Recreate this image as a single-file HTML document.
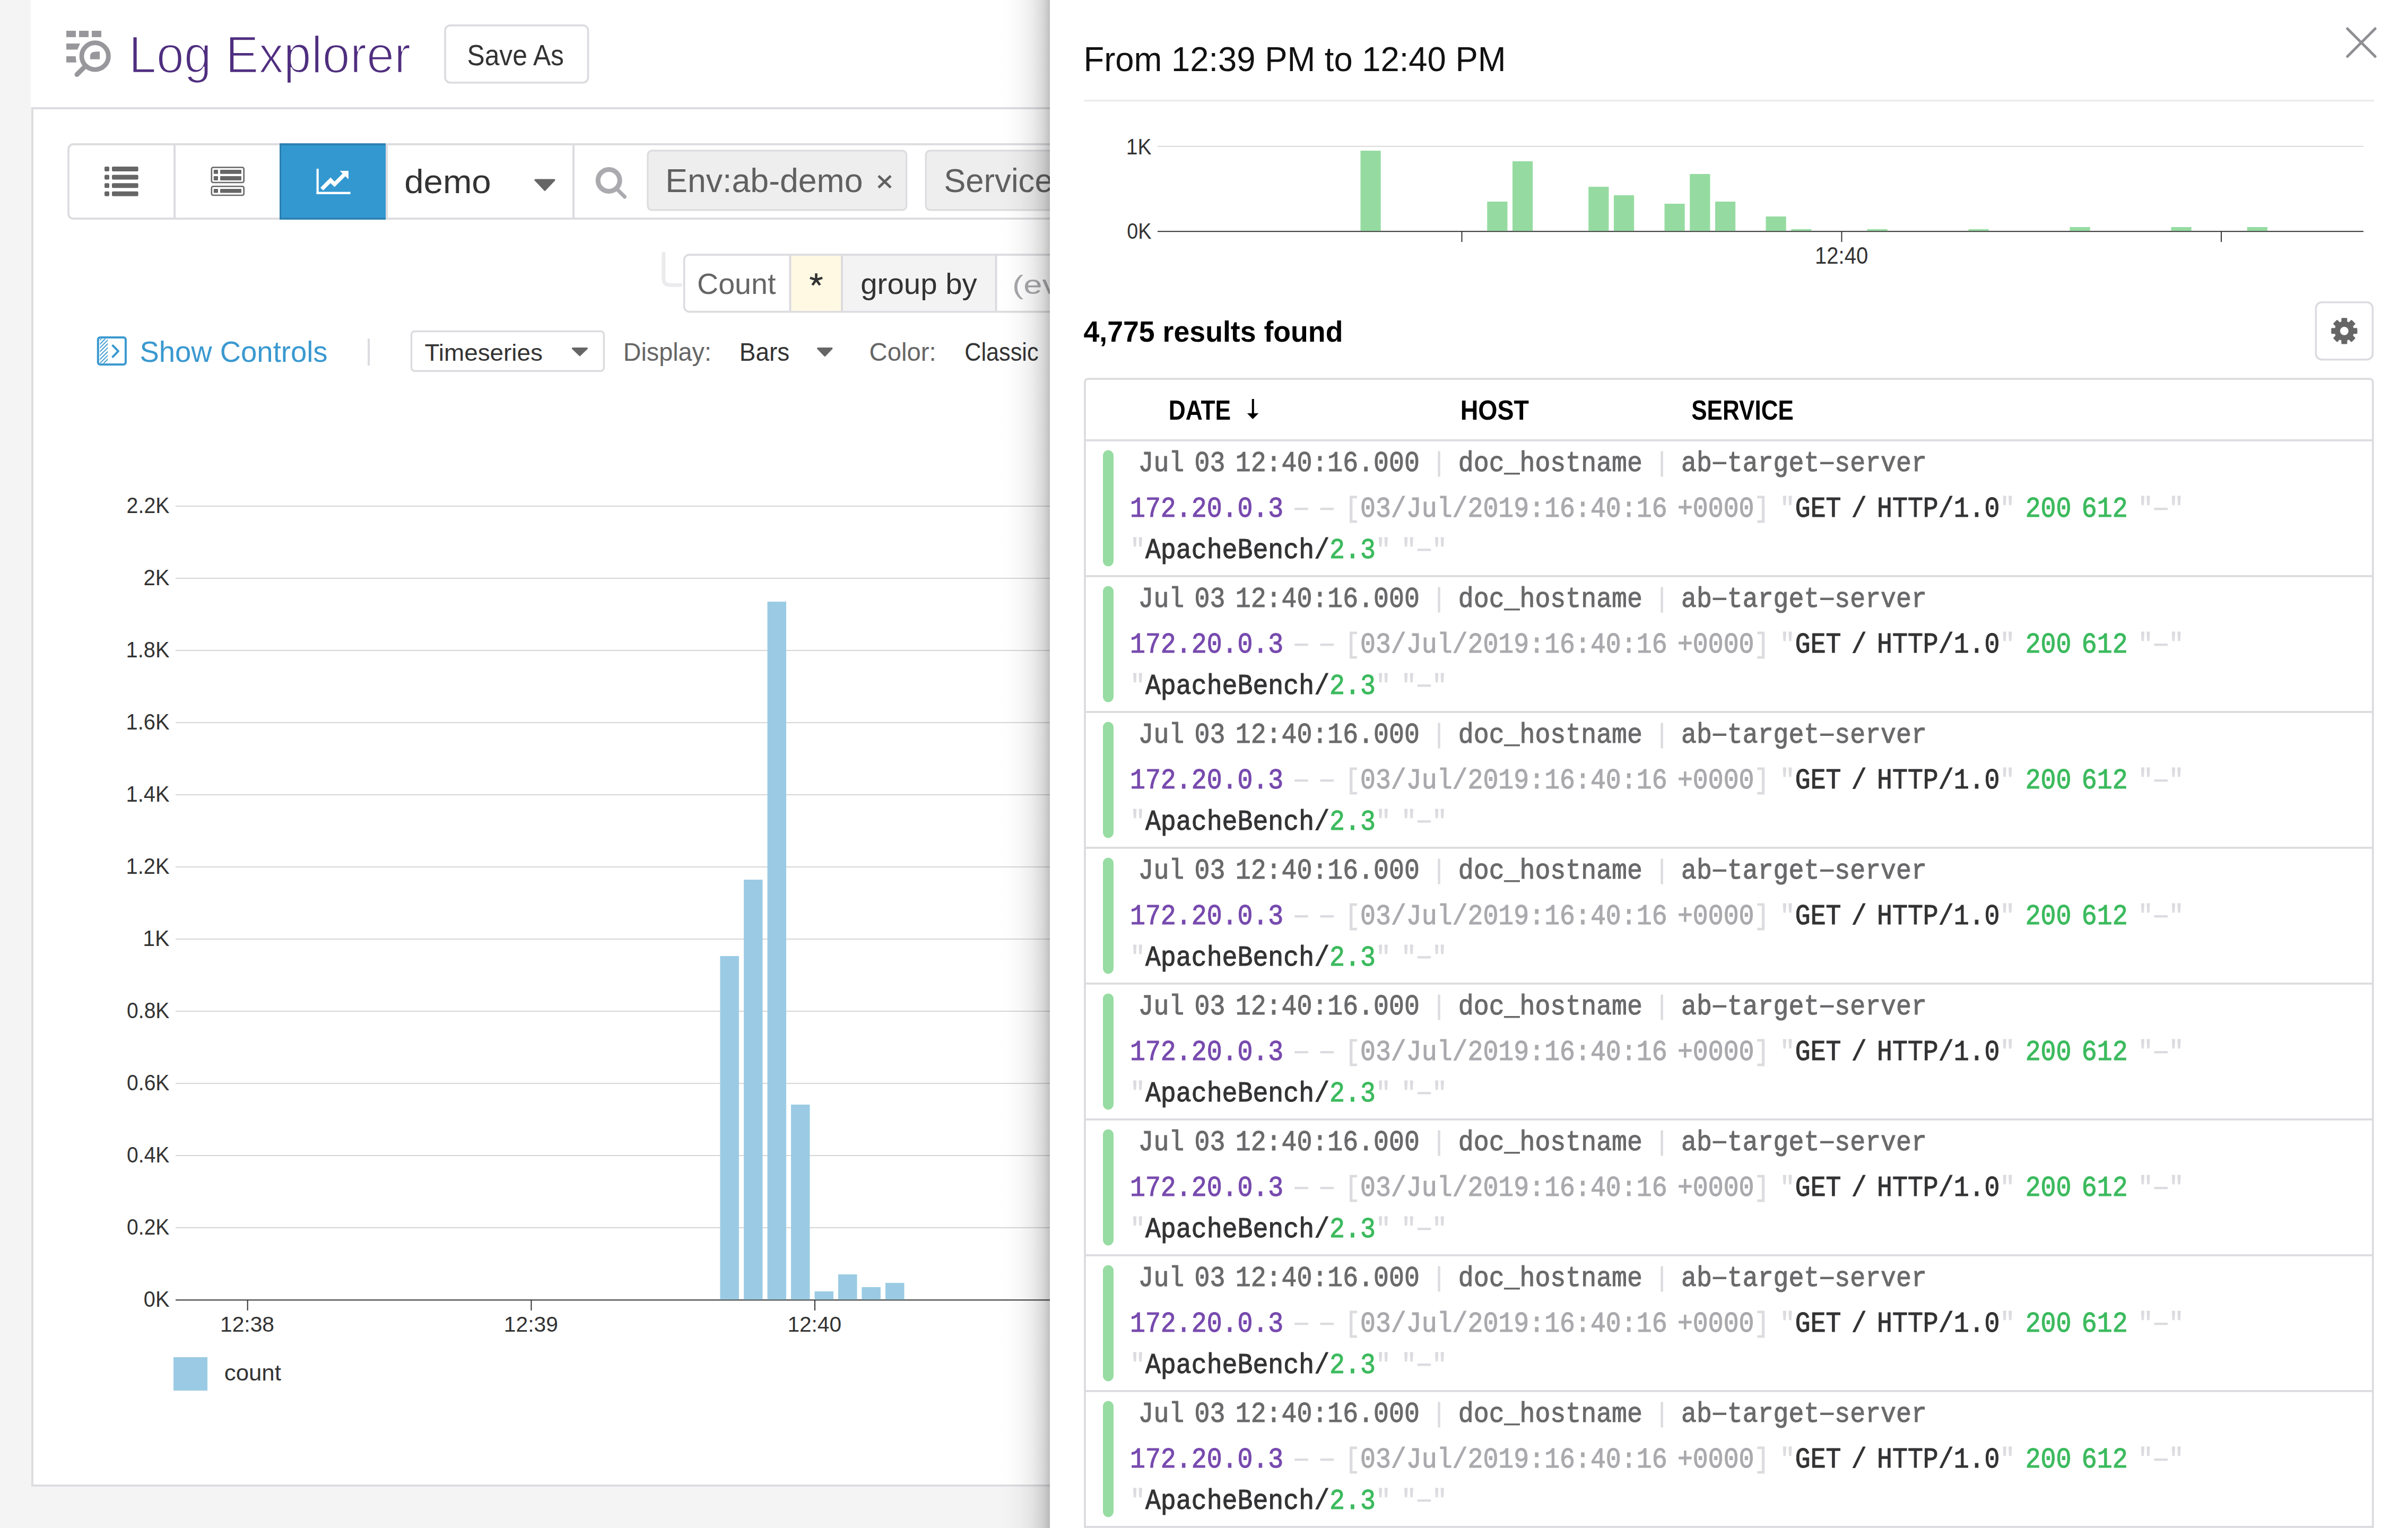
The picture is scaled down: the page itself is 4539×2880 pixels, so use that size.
<!DOCTYPE html>
<html><head><meta charset="utf-8"><title>Log Explorer</title>
<style>html,body{margin:0;padding:0;background:#f4f4f5;overflow:hidden;width:4539px;height:2880px}svg{display:block}</style>
</head><body>
<svg width="4539" height="2880" viewBox="0 0 4539 2880"><rect x="0.00" y="0.00" width="4539.00" height="2880.00" fill="#f4f4f5"/>
<rect x="58.00" y="0.00" width="4481.00" height="202.00" fill="#ffffff"/>
<rect x="59.00" y="202.00" width="4480.00" height="2600.00" fill="#dddde1"/>
<rect x="63.00" y="206.00" width="4476.00" height="2592.00" fill="#ffffff"/>
<rect x="125.00" y="58.00" width="18.00" height="12.00" fill="#98989c"/>
<rect x="149.00" y="58.00" width="18.00" height="12.00" fill="#98989c"/>
<rect x="173.00" y="58.00" width="18.00" height="12.00" fill="#98989c"/>
<path d="M125 82 H151 L146 93.6 H125 Z" fill="#98989c"/>
<path d="M125 106 H142.5 L144 117.7 H125 Z" fill="#98989c"/>
<circle cx="179.2" cy="105.9" r="25.2" fill="none" stroke="#98989c" stroke-width="8.8"/>
<line x1="145" y1="140.5" x2="158" y2="127.5" stroke="#98989c" stroke-width="9" stroke-linecap="round"/>
<path d="M170 111.7 V104 Q171 97.3 182 97.3 H188 V111.7 Z" fill="#98989c"/>
<text transform="translate(242.51 136.80) scale(0.9463 1)" font-family='"Liberation Sans", sans-serif' font-weight="400" font-size="99.13" fill="#4f2e7f" stroke="#fff" stroke-width="2.6">Log Explorer</text>
<rect x="839.05" y="47.85" width="269.50" height="107.90" fill="#fff" stroke="#dcdce0" stroke-width="3.70" rx="10.00"/>
<text transform="translate(880.44 122.60) scale(0.8871 1)" font-family='"Liberation Sans", sans-serif' font-weight="400" font-size="56.11" fill="#333">Save As</text>
<rect x="129.05" y="271.95" width="1969.10" height="140.20" fill="#fff" stroke="#dcdce0" stroke-width="3.70" rx="9.00"/>
<rect x="327.00" y="272.00" width="4.00" height="140.00" fill="#dcdce0"/>
<rect x="1079.00" y="272.00" width="4.00" height="140.00" fill="#dcdce0"/>
<rect x="527.00" y="270.10" width="200.00" height="143.90" fill="#2b7fb1"/>
<rect x="530.00" y="274.00" width="197.00" height="136.50" fill="#3398d0"/>
<rect x="727.00" y="272.00" width="4.00" height="140.00" fill="#dcdce0"/>
<rect x="197.00" y="314.00" width="9.00" height="9.00" fill="#666666" rx="2.00"/>
<rect x="211.00" y="314.00" width="49.60" height="9.00" fill="#666666" rx="2.00"/>
<rect x="197.00" y="329.60" width="9.00" height="9.00" fill="#666666" rx="2.00"/>
<rect x="211.00" y="329.60" width="49.60" height="9.00" fill="#666666" rx="2.00"/>
<rect x="197.00" y="345.20" width="9.00" height="9.00" fill="#666666" rx="2.00"/>
<rect x="211.00" y="345.20" width="49.60" height="9.00" fill="#666666" rx="2.00"/>
<rect x="197.00" y="360.80" width="9.00" height="9.00" fill="#666666" rx="2.00"/>
<rect x="211.00" y="360.80" width="49.60" height="9.00" fill="#666666" rx="2.00"/>
<rect x="398.80" y="315.50" width="60.90" height="28.50" fill="none" stroke="#666666" stroke-width="2.60" rx="3.00"/>
<rect x="398.80" y="351.20" width="60.90" height="16.80" fill="none" stroke="#666666" stroke-width="2.60" rx="3.00"/>
<rect x="402.80" y="320.00" width="8.20" height="7.70" fill="#666666" rx="1.00"/>
<rect x="415.00" y="320.00" width="40.00" height="7.70" fill="#666666" rx="1.00"/>
<rect x="402.80" y="332.00" width="8.20" height="7.90" fill="#666666" rx="1.00"/>
<rect x="415.00" y="332.00" width="40.00" height="7.90" fill="#666666" rx="1.00"/>
<rect x="402.80" y="356.00" width="8.20" height="7.60" fill="#666666" rx="1.00"/>
<rect x="415.00" y="356.00" width="40.00" height="7.60" fill="#666666" rx="1.00"/>
<rect x="596.60" y="318.00" width="4.10" height="48.00" fill="#fff"/>
<rect x="596.60" y="361.60" width="64.00" height="4.40" fill="#fff"/>
<polyline points="606.5,356.3 623.1,339.8 630.6,347.3 650.5,327.5" fill="none" stroke="#fff" stroke-width="7.4" stroke-linejoin="miter"/>
<path d="M640.6 322 L656.9 322 L656.9 338 Z" fill="#fff"/>
<text transform="translate(762.26 363.80) scale(1.0295 1)" font-family='"Liberation Sans", sans-serif' font-weight="400" font-size="63.48" fill="#333">demo</text>
<path d="M1009.2 339.2 L1044.7 339.2 L1027 358 Z" fill="#666" stroke="#666" stroke-width="3.6" stroke-linejoin="round"/>
<circle cx="1147.7" cy="340" r="20.5" fill="none" stroke="#aaaaaf" stroke-width="9"/>
<line x1="1162" y1="355.5" x2="1177.5" y2="371" stroke="#aaaaaf" stroke-width="7" stroke-linecap="round"/>
<rect x="1220.90" y="283.80" width="487.80" height="112.10" fill="#eeeeef" stroke="#dcdce0" stroke-width="3.20" rx="8.00"/>
<text transform="translate(1254.26 362.40) scale(0.9834 1)" font-family='"Liberation Sans", sans-serif' font-weight="400" font-size="63.66" fill="#606060">Env:ab-demo</text>
<path d="M1656 331.5 L1679 353.5 M1679 331.5 L1656 353.5" stroke="#606060" stroke-width="4.6"/>
<rect x="1745.20" y="283.80" width="553.20" height="112.10" fill="#eeeeef" stroke="#dcdce0" stroke-width="3.20" rx="8.00"/>
<text transform="translate(1779.20 362.40) scale(0.9682 1)" font-family='"Liberation Sans", sans-serif' font-weight="400" font-size="63.66" fill="#606060">Service</text>
<path d="M1250.8 478 V525 Q1250.8 537.3 1263 537.3 H1282.5" fill="none" stroke="#ebebed" stroke-width="6.9" stroke-linecap="round"/>
<rect x="1289.60" y="480.10" width="1008.60" height="107.50" fill="#fff" stroke="#dcdce0" stroke-width="3.60" rx="10.00"/>
<rect x="1491.40" y="481.90" width="93.60" height="104.00" fill="#fff9e3"/>
<rect x="1589.00" y="481.90" width="286.50" height="104.00" fill="#f3f3f4"/>
<rect x="1487.40" y="480.00" width="4.00" height="108.00" fill="#dcdce0"/>
<rect x="1585.00" y="480.00" width="4.00" height="108.00" fill="#dcdce0"/>
<rect x="1875.50" y="480.00" width="4.00" height="108.00" fill="#dcdce0"/>
<text transform="translate(1313.98 554.00) scale(1.0071 1)" font-family='"Liberation Sans", sans-serif' font-weight="400" font-size="55.23" fill="#666">Count</text>
<g stroke="#333" stroke-width="4.6"><line x1="1538.5" y1="527.4" x2="1538.50" y2="515.20"/><line x1="1538.5" y1="527.4" x2="1550.10" y2="523.63"/><line x1="1538.5" y1="527.4" x2="1545.67" y2="537.27"/><line x1="1538.5" y1="527.4" x2="1531.33" y2="537.27"/><line x1="1538.5" y1="527.4" x2="1526.90" y2="523.63"/></g>
<text transform="translate(1622.23 554.00) scale(1.0299 1)" font-family='"Liberation Sans", sans-serif' font-weight="400" font-size="54.79" fill="#333">group by</text>
<text transform="translate(1908.06 554.00) scale(1.2510 1)" font-family='"Liberation Sans", sans-serif' font-weight="400" font-size="50.73" fill="#a8a8ac">(ev</text>
<rect x="184.80" y="636.00" width="52.10" height="51.00" fill="none" stroke="#3a99d0" stroke-width="4.00" rx="4.00"/>
<defs><clipPath id="hc"><rect x="188.3" y="638.5" width="14.8" height="46"/></clipPath></defs>
<g clip-path="url(#hc)" stroke="#3a99d0" stroke-width="1.9"><line x1="183.0" y1="646.5" x2="210.0" y2="619.5"/><line x1="183.0" y1="653.8" x2="210.0" y2="626.8"/><line x1="183.0" y1="661.0" x2="210.0" y2="634.0"/><line x1="183.0" y1="668.2" x2="210.0" y2="641.2"/><line x1="183.0" y1="675.5" x2="210.0" y2="648.5"/><line x1="183.0" y1="682.8" x2="210.0" y2="655.8"/><line x1="183.0" y1="690.0" x2="210.0" y2="663.0"/><line x1="183.0" y1="697.2" x2="210.0" y2="670.2"/></g>
<polyline points="212.7,651.4 222.9,661.9 212.7,672.4" fill="none" stroke="#3a99d0" stroke-width="4.2" stroke-linecap="round" stroke-linejoin="round"/>
<text transform="translate(263.53 681.80) scale(0.9805 1)" font-family='"Liberation Sans", sans-serif' font-weight="400" font-size="55.52" fill="#3a99d0">Show Controls</text>
<rect x="693.00" y="638.00" width="4.00" height="51.00" fill="#dcdce0"/>
<rect x="775.50" y="624.50" width="362.80" height="74.80" fill="#fff" stroke="#dcdce0" stroke-width="3.40" rx="6.00"/>
<text transform="translate(800.57 679.70) scale(1.0138 1)" font-family='"Liberation Sans", sans-serif' font-weight="400" font-size="45.20" fill="#333">Timeseries</text>
<path d="M1079.4 656.6 L1106.4 656.6 L1092.9 669.5 Z" fill="#666" stroke="#666" stroke-width="3.2" stroke-linejoin="round"/>
<text transform="translate(1174.77 679.50) scale(0.9886 1)" font-family='"Liberation Sans", sans-serif' font-weight="400" font-size="47.24" fill="#666">Display:</text>
<text transform="translate(1393.83 679.50) scale(0.9722 1)" font-family='"Liberation Sans", sans-serif' font-weight="400" font-size="47.24" fill="#333">Bars</text>
<path d="M1541.6 656.6 L1568 656.6 L1554.8 670.4 Z" fill="#666" stroke="#666" stroke-width="3.2" stroke-linejoin="round"/>
<text transform="translate(1638.60 679.50) scale(1.0009 1)" font-family='"Liberation Sans", sans-serif' font-weight="400" font-size="47.24" fill="#666">Color:</text>
<text transform="translate(1818.20 679.50) scale(0.9153 1)" font-family='"Liberation Sans", sans-serif' font-weight="400" font-size="47.24" fill="#333">Classic</text>
<rect x="331.00" y="953.00" width="1700.00" height="2.00" fill="#d6d6d7"/>
<text transform="translate(238.62 967.00) scale(0.9320 1)" font-family='"Liberation Sans", sans-serif' font-weight="400" font-size="42.15" fill="#333">2.2K</text>
<rect x="331.00" y="1089.00" width="1700.00" height="2.00" fill="#d6d6d7"/>
<text transform="translate(270.38 1103.00) scale(0.9517 1)" font-family='"Liberation Sans", sans-serif' font-weight="400" font-size="42.15" fill="#333">2K</text>
<rect x="331.00" y="1225.00" width="1700.00" height="2.00" fill="#d6d6d7"/>
<text transform="translate(237.57 1239.00) scale(0.9443 1)" font-family='"Liberation Sans", sans-serif' font-weight="400" font-size="42.15" fill="#333">1.8K</text>
<rect x="331.00" y="1361.00" width="1700.00" height="2.00" fill="#d6d6d7"/>
<text transform="translate(237.57 1375.00) scale(0.9443 1)" font-family='"Liberation Sans", sans-serif' font-weight="400" font-size="42.15" fill="#333">1.6K</text>
<rect x="331.00" y="1497.00" width="1700.00" height="2.00" fill="#d6d6d7"/>
<text transform="translate(237.57 1511.00) scale(0.9443 1)" font-family='"Liberation Sans", sans-serif' font-weight="400" font-size="42.15" fill="#333">1.4K</text>
<rect x="331.00" y="1633.00" width="1700.00" height="2.00" fill="#d6d6d7"/>
<text transform="translate(237.57 1647.00) scale(0.9443 1)" font-family='"Liberation Sans", sans-serif' font-weight="400" font-size="42.15" fill="#333">1.2K</text>
<rect x="331.00" y="1769.00" width="1700.00" height="2.00" fill="#d6d6d7"/>
<text transform="translate(269.27 1783.00) scale(0.9734 1)" font-family='"Liberation Sans", sans-serif' font-weight="400" font-size="42.15" fill="#333">1K</text>
<rect x="331.00" y="1905.00" width="1700.00" height="2.00" fill="#d6d6d7"/>
<text transform="translate(239.07 1919.00) scale(0.9268 1)" font-family='"Liberation Sans", sans-serif' font-weight="400" font-size="42.15" fill="#333">0.8K</text>
<rect x="331.00" y="2041.00" width="1700.00" height="2.00" fill="#d6d6d7"/>
<text transform="translate(239.07 2055.00) scale(0.9268 1)" font-family='"Liberation Sans", sans-serif' font-weight="400" font-size="42.15" fill="#333">0.6K</text>
<rect x="331.00" y="2177.00" width="1700.00" height="2.00" fill="#d6d6d7"/>
<text transform="translate(239.07 2191.00) scale(0.9268 1)" font-family='"Liberation Sans", sans-serif' font-weight="400" font-size="42.15" fill="#333">0.4K</text>
<rect x="331.00" y="2313.00" width="1700.00" height="2.00" fill="#d6d6d7"/>
<text transform="translate(239.07 2327.00) scale(0.9268 1)" font-family='"Liberation Sans", sans-serif' font-weight="400" font-size="42.15" fill="#333">0.2K</text>
<text transform="translate(270.85 2463.00) scale(0.9426 1)" font-family='"Liberation Sans", sans-serif' font-weight="400" font-size="42.15" fill="#333">0K</text>
<rect x="331.00" y="2449.30" width="1700.00" height="2.00" fill="#333"/>
<rect x="465.70" y="2450.00" width="2.00" height="20.00" fill="#333"/>
<text transform="translate(415.10 2509.70) scale(0.9862 1)" font-family='"Liberation Sans", sans-serif' font-weight="400" font-size="41.28" fill="#333">12:38</text>
<rect x="1000.40" y="2450.00" width="2.00" height="20.00" fill="#333"/>
<text transform="translate(949.79 2509.70) scale(0.9878 1)" font-family='"Liberation Sans", sans-serif' font-weight="400" font-size="41.28" fill="#333">12:39</text>
<rect x="1535.00" y="2450.00" width="2.00" height="20.00" fill="#333"/>
<text transform="translate(1484.40 2509.70) scale(0.9843 1)" font-family='"Liberation Sans", sans-serif' font-weight="400" font-size="41.28" fill="#333">12:40</text>
<rect x="1357.40" y="1802.00" width="35.50" height="647.30" fill="#9bcbe4"/>
<rect x="1402.00" y="1658.00" width="35.50" height="791.30" fill="#9bcbe4"/>
<rect x="1446.50" y="1134.00" width="35.50" height="1315.30" fill="#9bcbe4"/>
<rect x="1491.00" y="2082.00" width="35.50" height="367.30" fill="#9bcbe4"/>
<rect x="1535.50" y="2434.00" width="35.50" height="15.30" fill="#9bcbe4"/>
<rect x="1580.00" y="2402.00" width="35.50" height="47.30" fill="#9bcbe4"/>
<rect x="1624.40" y="2426.00" width="35.50" height="23.30" fill="#9bcbe4"/>
<rect x="1669.00" y="2418.00" width="35.50" height="31.30" fill="#9bcbe4"/>
<rect x="327.00" y="2558.00" width="64.00" height="63.00" fill="#9bcbe4"/>
<text transform="translate(422.84 2602.10) scale(1.0178 1)" font-family='"Liberation Sans", sans-serif' font-weight="400" font-size="42.97" fill="#333">count</text>
<defs><linearGradient id="sh" x1="0" x2="1" y1="0" y2="0"><stop offset="0" stop-color="#000" stop-opacity="0"/><stop offset="0.2" stop-color="#000" stop-opacity="0.006"/><stop offset="0.45" stop-color="#000" stop-opacity="0.03"/><stop offset="0.68" stop-color="#000" stop-opacity="0.075"/><stop offset="0.87" stop-color="#000" stop-opacity="0.15"/><stop offset="1" stop-color="#000" stop-opacity="0.25"/></linearGradient></defs>
<rect x="1879.00" y="0.00" width="100.00" height="2880.00" fill="url(#sh)"/>
<rect x="1979.00" y="0.00" width="2560.00" height="2880.00" fill="#ffffff"/>
<text transform="translate(2042.50 133.90) scale(0.9691 1)" font-family='"Liberation Sans", sans-serif' font-weight="400" font-size="65.41" fill="#111">From 12:39 PM to 12:40 PM</text>
<rect x="2043.00" y="188.00" width="2432.00" height="3.40" fill="#ececee"/>
<path d="M4424.7 53.9 L4477.2 106.4 M4477.2 53.9 L4424.7 106.4" stroke="#8f8f93" stroke-width="5" stroke-linecap="round"/>
<rect x="2182.00" y="274.80" width="2273.00" height="2.00" fill="#d9d9da"/>
<rect x="2182.00" y="435.20" width="2273.00" height="2.00" fill="#333"/>
<text transform="translate(2122.73 290.50) scale(0.9190 1)" font-family='"Liberation Sans", sans-serif' font-weight="400" font-size="42.44" fill="#333">1K</text>
<text transform="translate(2124.22 449.80) scale(0.9023 1)" font-family='"Liberation Sans", sans-serif' font-weight="400" font-size="41.86" fill="#333">0K</text>
<rect x="2754.50" y="436.00" width="2.00" height="20.00" fill="#333"/>
<rect x="3470.50" y="436.00" width="2.00" height="20.00" fill="#333"/>
<rect x="4186.00" y="436.00" width="2.00" height="20.00" fill="#333"/>
<text transform="translate(3420.94 497.00) scale(0.9203 1)" font-family='"Liberation Sans", sans-serif' font-weight="400" font-size="43.61" fill="#333">12:40</text>
<rect x="2564.50" y="284.00" width="38.20" height="151.20" fill="#95dba1"/>
<rect x="2803.25" y="380.00" width="38.20" height="55.20" fill="#95dba1"/>
<rect x="2851.00" y="304.00" width="38.20" height="131.20" fill="#95dba1"/>
<rect x="2994.25" y="352.00" width="38.20" height="83.20" fill="#95dba1"/>
<rect x="3042.00" y="368.00" width="38.20" height="67.20" fill="#95dba1"/>
<rect x="3137.50" y="384.00" width="38.20" height="51.20" fill="#95dba1"/>
<rect x="3185.25" y="328.00" width="38.20" height="107.20" fill="#95dba1"/>
<rect x="3233.00" y="380.00" width="38.20" height="55.20" fill="#95dba1"/>
<rect x="3328.50" y="408.00" width="38.20" height="27.20" fill="#95dba1"/>
<rect x="3376.25" y="432.00" width="38.20" height="3.20" fill="#95dba1"/>
<rect x="3519.50" y="432.00" width="38.20" height="3.20" fill="#95dba1"/>
<rect x="3710.50" y="432.00" width="38.20" height="3.20" fill="#95dba1"/>
<rect x="3901.50" y="428.00" width="38.20" height="7.20" fill="#95dba1"/>
<rect x="4092.50" y="428.00" width="38.20" height="7.20" fill="#95dba1"/>
<rect x="4235.75" y="428.00" width="38.20" height="7.20" fill="#95dba1"/>
<rect x="4365.40" y="569.80" width="107.00" height="107.90" fill="#fff" stroke="#dcdce0" stroke-width="3.60" rx="11.00"/>
<g fill="#666"><rect x="4413.40" y="599.20" width="11" height="14" rx="1.5" transform="rotate(0.0 4418.90 623.80)"/><rect x="4413.40" y="599.20" width="11" height="14" rx="1.5" transform="rotate(45.0 4418.90 623.80)"/><rect x="4413.40" y="599.20" width="11" height="14" rx="1.5" transform="rotate(90.0 4418.90 623.80)"/><rect x="4413.40" y="599.20" width="11" height="14" rx="1.5" transform="rotate(135.0 4418.90 623.80)"/><rect x="4413.40" y="599.20" width="11" height="14" rx="1.5" transform="rotate(180.0 4418.90 623.80)"/><rect x="4413.40" y="599.20" width="11" height="14" rx="1.5" transform="rotate(225.0 4418.90 623.80)"/><rect x="4413.40" y="599.20" width="11" height="14" rx="1.5" transform="rotate(270.0 4418.90 623.80)"/><rect x="4413.40" y="599.20" width="11" height="14" rx="1.5" transform="rotate(315.0 4418.90 623.80)"/><circle cx="4418.90" cy="623.80" r="18.5"/></g>
<circle cx="4418.90" cy="623.80" r="7.9" fill="#fff"/>
<text transform="translate(2042.39 644.30) scale(0.9741 1)" font-family='"Liberation Sans", sans-serif' font-weight="700" font-size="55.09" fill="#000">4,775 results found</text>
<rect x="2045.00" y="714.10" width="2427.80" height="2284.00" fill="#fff" stroke="#dcdce0" stroke-width="3.80" rx="6.00"/>
<rect x="2046.00" y="828.00" width="2426.00" height="3.80" fill="#dcdce0"/>
<text transform="translate(2202.63 790.50) scale(0.8434 1)" font-family='"Liberation Sans", sans-serif' font-weight="700" font-size="52.62" fill="#000">DATE</text>
<rect x="2359.80" y="752.00" width="4.00" height="28.00" fill="#000"/>
<path d="M2350.8 778.9 L2372.4 778.9 L2361.4 790 Z" fill="#000"/>
<text transform="translate(2752.68 790.50) scale(0.8854 1)" font-family='"Liberation Sans", sans-serif' font-weight="700" font-size="52.62" fill="#000">HOST</text>
<text transform="translate(3188.13 790.50) scale(0.8381 1)" font-family='"Liberation Sans", sans-serif' font-weight="700" font-size="52.62" fill="#000">SERVICE</text>
<rect x="2079.00" y="848.50" width="20.00" height="219.00" fill="#97dca2" rx="10.00"/>
<g transform="translate(2145.50 888.00)" font-family='"Liberation Mono", monospace' font-size="48.33"><text transform="translate(0.00 0) scale(0.9976 1.120)" fill="#6a6a6c" stroke="#6a6a6c" stroke-width="1.0">Jul</text><text transform="translate(106.09 0) scale(0.9976 1.120)" fill="#6a6a6c" stroke="#6a6a6c" stroke-width="1.0">03</text><text transform="translate(183.25 0) scale(0.9976 1.120)" fill="#6a6a6c" stroke="#6a6a6c" stroke-width="1.0">12:40:16.000</text></g>
<rect x="2710.30" y="850.50" width="4.50" height="48.00" fill="#dcdce0"/>
<g transform="translate(2748.80 888.00)" font-family='"Liberation Mono", monospace' font-size="48.33"><text transform="translate(0.00 0) scale(0.9976 1.120)" fill="#6a6a6c" stroke="#6a6a6c" stroke-width="1.0">doc_hostname</text></g>
<rect x="3130.40" y="850.50" width="4.50" height="48.00" fill="#dcdce0"/>
<g transform="translate(3169.00 888.00)" font-family='"Liberation Mono", monospace' font-size="48.33"><text transform="translate(0.00 0) scale(0.9976 1.120)" fill="#6a6a6c" stroke="#6a6a6c" stroke-width="1.0">ab</text><text transform="translate(86.79 0) scale(0.9976 1.120)" fill="#6a6a6c" stroke="#6a6a6c" stroke-width="1.0">target</text><text transform="translate(289.30 0) scale(0.9976 1.120)" fill="#6a6a6c" stroke="#6a6a6c" stroke-width="1.0">server</text><rect x="59.58" y="-17.40" width="25.50" height="4.40" fill="#6a6a6c"/><rect x="262.08" y="-17.40" width="25.50" height="4.40" fill="#6a6a6c"/></g>
<g transform="translate(2130.00 974.40)" font-family='"Liberation Mono", monospace' font-size="48.33"><text transform="translate(0.00 0) scale(0.9976 1.120)" fill="#774aae" stroke="#774aae" stroke-width="1.0">172.20.0.3</text><text transform="translate(405.06 0) scale(0.9976 1.120)" fill="#dcdce0" stroke="#dcdce0" stroke-width="1.0">[</text><text transform="translate(433.99 0) scale(0.9976 1.120)" fill="#aaaaae" stroke="#aaaaae" stroke-width="1.0">03/Jul/2019:16:40:16</text><text transform="translate(1031.89 0) scale(0.9976 1.120)" fill="#aaaaae" stroke="#aaaaae" stroke-width="1.0">+0000</text><text transform="translate(1176.54 0) scale(0.9976 1.120)" fill="#dcdce0" stroke="#dcdce0" stroke-width="1.0">]</text><text transform="translate(1224.77 0) scale(0.9976 1.120)" fill="#dcdce0" stroke="#dcdce0" stroke-width="1.0">&quot;</text><text transform="translate(1253.70 0) scale(0.9976 1.120)" fill="#333335" stroke="#333335" stroke-width="1.0">GET</text><text transform="translate(1359.79 0) scale(0.9976 1.120)" fill="#333335" stroke="#333335" stroke-width="1.0">/</text><text transform="translate(1408.02 0) scale(0.9976 1.120)" fill="#333335" stroke="#333335" stroke-width="1.0">HTTP/1.0</text><text transform="translate(1639.46 0) scale(0.9976 1.120)" fill="#dcdce0" stroke="#dcdce0" stroke-width="1.0">&quot;</text><text transform="translate(1687.69 0) scale(0.9976 1.120)" fill="#3cba5e" stroke="#3cba5e" stroke-width="1.0">200</text><text transform="translate(1793.78 0) scale(0.9976 1.120)" fill="#3cba5e" stroke="#3cba5e" stroke-width="1.0">612</text><text transform="translate(1899.87 0) scale(0.9976 1.120)" fill="#dcdce0" stroke="#dcdce0" stroke-width="1.0">&quot;</text><text transform="translate(1957.73 0) scale(0.9976 1.120)" fill="#dcdce0" stroke="#dcdce0" stroke-width="1.0">&quot;</text><rect x="310.31" y="-17.40" width="25.50" height="4.40" fill="#dcdce0"/><rect x="358.55" y="-17.40" width="25.50" height="4.40" fill="#dcdce0"/><rect x="1930.52" y="-17.40" width="25.50" height="4.40" fill="#dcdce0"/></g>
<g transform="translate(2130.00 1051.50)" font-family='"Liberation Mono", monospace' font-size="48.33"><text transform="translate(0.00 0) scale(0.9976 1.120)" fill="#dcdce0" stroke="#dcdce0" stroke-width="1.0">&quot;</text><text transform="translate(28.93 0) scale(0.9976 1.120)" fill="#333335" stroke="#333335" stroke-width="1.0">ApacheBench/</text><text transform="translate(376.09 0) scale(0.9976 1.120)" fill="#3cba5e" stroke="#3cba5e" stroke-width="1.0">2.3</text><text transform="translate(462.88 0) scale(0.9976 1.120)" fill="#dcdce0" stroke="#dcdce0" stroke-width="1.0">&quot;</text><text transform="translate(511.11 0) scale(0.9976 1.120)" fill="#dcdce0" stroke="#dcdce0" stroke-width="1.0">&quot;</text><text transform="translate(568.97 0) scale(0.9976 1.120)" fill="#dcdce0" stroke="#dcdce0" stroke-width="1.0">&quot;</text><rect x="541.76" y="-17.40" width="25.50" height="4.40" fill="#dcdce0"/></g>
<rect x="2046.00" y="1084.00" width="2426.00" height="3.80" fill="#dcdce0"/>
<rect x="2079.00" y="1104.50" width="20.00" height="219.00" fill="#97dca2" rx="10.00"/>
<g transform="translate(2145.50 1144.00)" font-family='"Liberation Mono", monospace' font-size="48.33"><text transform="translate(0.00 0) scale(0.9976 1.120)" fill="#6a6a6c" stroke="#6a6a6c" stroke-width="1.0">Jul</text><text transform="translate(106.09 0) scale(0.9976 1.120)" fill="#6a6a6c" stroke="#6a6a6c" stroke-width="1.0">03</text><text transform="translate(183.25 0) scale(0.9976 1.120)" fill="#6a6a6c" stroke="#6a6a6c" stroke-width="1.0">12:40:16.000</text></g>
<rect x="2710.30" y="1106.50" width="4.50" height="48.00" fill="#dcdce0"/>
<g transform="translate(2748.80 1144.00)" font-family='"Liberation Mono", monospace' font-size="48.33"><text transform="translate(0.00 0) scale(0.9976 1.120)" fill="#6a6a6c" stroke="#6a6a6c" stroke-width="1.0">doc_hostname</text></g>
<rect x="3130.40" y="1106.50" width="4.50" height="48.00" fill="#dcdce0"/>
<g transform="translate(3169.00 1144.00)" font-family='"Liberation Mono", monospace' font-size="48.33"><text transform="translate(0.00 0) scale(0.9976 1.120)" fill="#6a6a6c" stroke="#6a6a6c" stroke-width="1.0">ab</text><text transform="translate(86.79 0) scale(0.9976 1.120)" fill="#6a6a6c" stroke="#6a6a6c" stroke-width="1.0">target</text><text transform="translate(289.30 0) scale(0.9976 1.120)" fill="#6a6a6c" stroke="#6a6a6c" stroke-width="1.0">server</text><rect x="59.58" y="-17.40" width="25.50" height="4.40" fill="#6a6a6c"/><rect x="262.08" y="-17.40" width="25.50" height="4.40" fill="#6a6a6c"/></g>
<g transform="translate(2130.00 1230.40)" font-family='"Liberation Mono", monospace' font-size="48.33"><text transform="translate(0.00 0) scale(0.9976 1.120)" fill="#774aae" stroke="#774aae" stroke-width="1.0">172.20.0.3</text><text transform="translate(405.06 0) scale(0.9976 1.120)" fill="#dcdce0" stroke="#dcdce0" stroke-width="1.0">[</text><text transform="translate(433.99 0) scale(0.9976 1.120)" fill="#aaaaae" stroke="#aaaaae" stroke-width="1.0">03/Jul/2019:16:40:16</text><text transform="translate(1031.89 0) scale(0.9976 1.120)" fill="#aaaaae" stroke="#aaaaae" stroke-width="1.0">+0000</text><text transform="translate(1176.54 0) scale(0.9976 1.120)" fill="#dcdce0" stroke="#dcdce0" stroke-width="1.0">]</text><text transform="translate(1224.77 0) scale(0.9976 1.120)" fill="#dcdce0" stroke="#dcdce0" stroke-width="1.0">&quot;</text><text transform="translate(1253.70 0) scale(0.9976 1.120)" fill="#333335" stroke="#333335" stroke-width="1.0">GET</text><text transform="translate(1359.79 0) scale(0.9976 1.120)" fill="#333335" stroke="#333335" stroke-width="1.0">/</text><text transform="translate(1408.02 0) scale(0.9976 1.120)" fill="#333335" stroke="#333335" stroke-width="1.0">HTTP/1.0</text><text transform="translate(1639.46 0) scale(0.9976 1.120)" fill="#dcdce0" stroke="#dcdce0" stroke-width="1.0">&quot;</text><text transform="translate(1687.69 0) scale(0.9976 1.120)" fill="#3cba5e" stroke="#3cba5e" stroke-width="1.0">200</text><text transform="translate(1793.78 0) scale(0.9976 1.120)" fill="#3cba5e" stroke="#3cba5e" stroke-width="1.0">612</text><text transform="translate(1899.87 0) scale(0.9976 1.120)" fill="#dcdce0" stroke="#dcdce0" stroke-width="1.0">&quot;</text><text transform="translate(1957.73 0) scale(0.9976 1.120)" fill="#dcdce0" stroke="#dcdce0" stroke-width="1.0">&quot;</text><rect x="310.31" y="-17.40" width="25.50" height="4.40" fill="#dcdce0"/><rect x="358.55" y="-17.40" width="25.50" height="4.40" fill="#dcdce0"/><rect x="1930.52" y="-17.40" width="25.50" height="4.40" fill="#dcdce0"/></g>
<g transform="translate(2130.00 1307.50)" font-family='"Liberation Mono", monospace' font-size="48.33"><text transform="translate(0.00 0) scale(0.9976 1.120)" fill="#dcdce0" stroke="#dcdce0" stroke-width="1.0">&quot;</text><text transform="translate(28.93 0) scale(0.9976 1.120)" fill="#333335" stroke="#333335" stroke-width="1.0">ApacheBench/</text><text transform="translate(376.09 0) scale(0.9976 1.120)" fill="#3cba5e" stroke="#3cba5e" stroke-width="1.0">2.3</text><text transform="translate(462.88 0) scale(0.9976 1.120)" fill="#dcdce0" stroke="#dcdce0" stroke-width="1.0">&quot;</text><text transform="translate(511.11 0) scale(0.9976 1.120)" fill="#dcdce0" stroke="#dcdce0" stroke-width="1.0">&quot;</text><text transform="translate(568.97 0) scale(0.9976 1.120)" fill="#dcdce0" stroke="#dcdce0" stroke-width="1.0">&quot;</text><rect x="541.76" y="-17.40" width="25.50" height="4.40" fill="#dcdce0"/></g>
<rect x="2046.00" y="1340.00" width="2426.00" height="3.80" fill="#dcdce0"/>
<rect x="2079.00" y="1360.50" width="20.00" height="219.00" fill="#97dca2" rx="10.00"/>
<g transform="translate(2145.50 1400.00)" font-family='"Liberation Mono", monospace' font-size="48.33"><text transform="translate(0.00 0) scale(0.9976 1.120)" fill="#6a6a6c" stroke="#6a6a6c" stroke-width="1.0">Jul</text><text transform="translate(106.09 0) scale(0.9976 1.120)" fill="#6a6a6c" stroke="#6a6a6c" stroke-width="1.0">03</text><text transform="translate(183.25 0) scale(0.9976 1.120)" fill="#6a6a6c" stroke="#6a6a6c" stroke-width="1.0">12:40:16.000</text></g>
<rect x="2710.30" y="1362.50" width="4.50" height="48.00" fill="#dcdce0"/>
<g transform="translate(2748.80 1400.00)" font-family='"Liberation Mono", monospace' font-size="48.33"><text transform="translate(0.00 0) scale(0.9976 1.120)" fill="#6a6a6c" stroke="#6a6a6c" stroke-width="1.0">doc_hostname</text></g>
<rect x="3130.40" y="1362.50" width="4.50" height="48.00" fill="#dcdce0"/>
<g transform="translate(3169.00 1400.00)" font-family='"Liberation Mono", monospace' font-size="48.33"><text transform="translate(0.00 0) scale(0.9976 1.120)" fill="#6a6a6c" stroke="#6a6a6c" stroke-width="1.0">ab</text><text transform="translate(86.79 0) scale(0.9976 1.120)" fill="#6a6a6c" stroke="#6a6a6c" stroke-width="1.0">target</text><text transform="translate(289.30 0) scale(0.9976 1.120)" fill="#6a6a6c" stroke="#6a6a6c" stroke-width="1.0">server</text><rect x="59.58" y="-17.40" width="25.50" height="4.40" fill="#6a6a6c"/><rect x="262.08" y="-17.40" width="25.50" height="4.40" fill="#6a6a6c"/></g>
<g transform="translate(2130.00 1486.40)" font-family='"Liberation Mono", monospace' font-size="48.33"><text transform="translate(0.00 0) scale(0.9976 1.120)" fill="#774aae" stroke="#774aae" stroke-width="1.0">172.20.0.3</text><text transform="translate(405.06 0) scale(0.9976 1.120)" fill="#dcdce0" stroke="#dcdce0" stroke-width="1.0">[</text><text transform="translate(433.99 0) scale(0.9976 1.120)" fill="#aaaaae" stroke="#aaaaae" stroke-width="1.0">03/Jul/2019:16:40:16</text><text transform="translate(1031.89 0) scale(0.9976 1.120)" fill="#aaaaae" stroke="#aaaaae" stroke-width="1.0">+0000</text><text transform="translate(1176.54 0) scale(0.9976 1.120)" fill="#dcdce0" stroke="#dcdce0" stroke-width="1.0">]</text><text transform="translate(1224.77 0) scale(0.9976 1.120)" fill="#dcdce0" stroke="#dcdce0" stroke-width="1.0">&quot;</text><text transform="translate(1253.70 0) scale(0.9976 1.120)" fill="#333335" stroke="#333335" stroke-width="1.0">GET</text><text transform="translate(1359.79 0) scale(0.9976 1.120)" fill="#333335" stroke="#333335" stroke-width="1.0">/</text><text transform="translate(1408.02 0) scale(0.9976 1.120)" fill="#333335" stroke="#333335" stroke-width="1.0">HTTP/1.0</text><text transform="translate(1639.46 0) scale(0.9976 1.120)" fill="#dcdce0" stroke="#dcdce0" stroke-width="1.0">&quot;</text><text transform="translate(1687.69 0) scale(0.9976 1.120)" fill="#3cba5e" stroke="#3cba5e" stroke-width="1.0">200</text><text transform="translate(1793.78 0) scale(0.9976 1.120)" fill="#3cba5e" stroke="#3cba5e" stroke-width="1.0">612</text><text transform="translate(1899.87 0) scale(0.9976 1.120)" fill="#dcdce0" stroke="#dcdce0" stroke-width="1.0">&quot;</text><text transform="translate(1957.73 0) scale(0.9976 1.120)" fill="#dcdce0" stroke="#dcdce0" stroke-width="1.0">&quot;</text><rect x="310.31" y="-17.40" width="25.50" height="4.40" fill="#dcdce0"/><rect x="358.55" y="-17.40" width="25.50" height="4.40" fill="#dcdce0"/><rect x="1930.52" y="-17.40" width="25.50" height="4.40" fill="#dcdce0"/></g>
<g transform="translate(2130.00 1563.50)" font-family='"Liberation Mono", monospace' font-size="48.33"><text transform="translate(0.00 0) scale(0.9976 1.120)" fill="#dcdce0" stroke="#dcdce0" stroke-width="1.0">&quot;</text><text transform="translate(28.93 0) scale(0.9976 1.120)" fill="#333335" stroke="#333335" stroke-width="1.0">ApacheBench/</text><text transform="translate(376.09 0) scale(0.9976 1.120)" fill="#3cba5e" stroke="#3cba5e" stroke-width="1.0">2.3</text><text transform="translate(462.88 0) scale(0.9976 1.120)" fill="#dcdce0" stroke="#dcdce0" stroke-width="1.0">&quot;</text><text transform="translate(511.11 0) scale(0.9976 1.120)" fill="#dcdce0" stroke="#dcdce0" stroke-width="1.0">&quot;</text><text transform="translate(568.97 0) scale(0.9976 1.120)" fill="#dcdce0" stroke="#dcdce0" stroke-width="1.0">&quot;</text><rect x="541.76" y="-17.40" width="25.50" height="4.40" fill="#dcdce0"/></g>
<rect x="2046.00" y="1596.00" width="2426.00" height="3.80" fill="#dcdce0"/>
<rect x="2079.00" y="1616.50" width="20.00" height="219.00" fill="#97dca2" rx="10.00"/>
<g transform="translate(2145.50 1656.00)" font-family='"Liberation Mono", monospace' font-size="48.33"><text transform="translate(0.00 0) scale(0.9976 1.120)" fill="#6a6a6c" stroke="#6a6a6c" stroke-width="1.0">Jul</text><text transform="translate(106.09 0) scale(0.9976 1.120)" fill="#6a6a6c" stroke="#6a6a6c" stroke-width="1.0">03</text><text transform="translate(183.25 0) scale(0.9976 1.120)" fill="#6a6a6c" stroke="#6a6a6c" stroke-width="1.0">12:40:16.000</text></g>
<rect x="2710.30" y="1618.50" width="4.50" height="48.00" fill="#dcdce0"/>
<g transform="translate(2748.80 1656.00)" font-family='"Liberation Mono", monospace' font-size="48.33"><text transform="translate(0.00 0) scale(0.9976 1.120)" fill="#6a6a6c" stroke="#6a6a6c" stroke-width="1.0">doc_hostname</text></g>
<rect x="3130.40" y="1618.50" width="4.50" height="48.00" fill="#dcdce0"/>
<g transform="translate(3169.00 1656.00)" font-family='"Liberation Mono", monospace' font-size="48.33"><text transform="translate(0.00 0) scale(0.9976 1.120)" fill="#6a6a6c" stroke="#6a6a6c" stroke-width="1.0">ab</text><text transform="translate(86.79 0) scale(0.9976 1.120)" fill="#6a6a6c" stroke="#6a6a6c" stroke-width="1.0">target</text><text transform="translate(289.30 0) scale(0.9976 1.120)" fill="#6a6a6c" stroke="#6a6a6c" stroke-width="1.0">server</text><rect x="59.58" y="-17.40" width="25.50" height="4.40" fill="#6a6a6c"/><rect x="262.08" y="-17.40" width="25.50" height="4.40" fill="#6a6a6c"/></g>
<g transform="translate(2130.00 1742.40)" font-family='"Liberation Mono", monospace' font-size="48.33"><text transform="translate(0.00 0) scale(0.9976 1.120)" fill="#774aae" stroke="#774aae" stroke-width="1.0">172.20.0.3</text><text transform="translate(405.06 0) scale(0.9976 1.120)" fill="#dcdce0" stroke="#dcdce0" stroke-width="1.0">[</text><text transform="translate(433.99 0) scale(0.9976 1.120)" fill="#aaaaae" stroke="#aaaaae" stroke-width="1.0">03/Jul/2019:16:40:16</text><text transform="translate(1031.89 0) scale(0.9976 1.120)" fill="#aaaaae" stroke="#aaaaae" stroke-width="1.0">+0000</text><text transform="translate(1176.54 0) scale(0.9976 1.120)" fill="#dcdce0" stroke="#dcdce0" stroke-width="1.0">]</text><text transform="translate(1224.77 0) scale(0.9976 1.120)" fill="#dcdce0" stroke="#dcdce0" stroke-width="1.0">&quot;</text><text transform="translate(1253.70 0) scale(0.9976 1.120)" fill="#333335" stroke="#333335" stroke-width="1.0">GET</text><text transform="translate(1359.79 0) scale(0.9976 1.120)" fill="#333335" stroke="#333335" stroke-width="1.0">/</text><text transform="translate(1408.02 0) scale(0.9976 1.120)" fill="#333335" stroke="#333335" stroke-width="1.0">HTTP/1.0</text><text transform="translate(1639.46 0) scale(0.9976 1.120)" fill="#dcdce0" stroke="#dcdce0" stroke-width="1.0">&quot;</text><text transform="translate(1687.69 0) scale(0.9976 1.120)" fill="#3cba5e" stroke="#3cba5e" stroke-width="1.0">200</text><text transform="translate(1793.78 0) scale(0.9976 1.120)" fill="#3cba5e" stroke="#3cba5e" stroke-width="1.0">612</text><text transform="translate(1899.87 0) scale(0.9976 1.120)" fill="#dcdce0" stroke="#dcdce0" stroke-width="1.0">&quot;</text><text transform="translate(1957.73 0) scale(0.9976 1.120)" fill="#dcdce0" stroke="#dcdce0" stroke-width="1.0">&quot;</text><rect x="310.31" y="-17.40" width="25.50" height="4.40" fill="#dcdce0"/><rect x="358.55" y="-17.40" width="25.50" height="4.40" fill="#dcdce0"/><rect x="1930.52" y="-17.40" width="25.50" height="4.40" fill="#dcdce0"/></g>
<g transform="translate(2130.00 1819.50)" font-family='"Liberation Mono", monospace' font-size="48.33"><text transform="translate(0.00 0) scale(0.9976 1.120)" fill="#dcdce0" stroke="#dcdce0" stroke-width="1.0">&quot;</text><text transform="translate(28.93 0) scale(0.9976 1.120)" fill="#333335" stroke="#333335" stroke-width="1.0">ApacheBench/</text><text transform="translate(376.09 0) scale(0.9976 1.120)" fill="#3cba5e" stroke="#3cba5e" stroke-width="1.0">2.3</text><text transform="translate(462.88 0) scale(0.9976 1.120)" fill="#dcdce0" stroke="#dcdce0" stroke-width="1.0">&quot;</text><text transform="translate(511.11 0) scale(0.9976 1.120)" fill="#dcdce0" stroke="#dcdce0" stroke-width="1.0">&quot;</text><text transform="translate(568.97 0) scale(0.9976 1.120)" fill="#dcdce0" stroke="#dcdce0" stroke-width="1.0">&quot;</text><rect x="541.76" y="-17.40" width="25.50" height="4.40" fill="#dcdce0"/></g>
<rect x="2046.00" y="1852.00" width="2426.00" height="3.80" fill="#dcdce0"/>
<rect x="2079.00" y="1872.50" width="20.00" height="219.00" fill="#97dca2" rx="10.00"/>
<g transform="translate(2145.50 1912.00)" font-family='"Liberation Mono", monospace' font-size="48.33"><text transform="translate(0.00 0) scale(0.9976 1.120)" fill="#6a6a6c" stroke="#6a6a6c" stroke-width="1.0">Jul</text><text transform="translate(106.09 0) scale(0.9976 1.120)" fill="#6a6a6c" stroke="#6a6a6c" stroke-width="1.0">03</text><text transform="translate(183.25 0) scale(0.9976 1.120)" fill="#6a6a6c" stroke="#6a6a6c" stroke-width="1.0">12:40:16.000</text></g>
<rect x="2710.30" y="1874.50" width="4.50" height="48.00" fill="#dcdce0"/>
<g transform="translate(2748.80 1912.00)" font-family='"Liberation Mono", monospace' font-size="48.33"><text transform="translate(0.00 0) scale(0.9976 1.120)" fill="#6a6a6c" stroke="#6a6a6c" stroke-width="1.0">doc_hostname</text></g>
<rect x="3130.40" y="1874.50" width="4.50" height="48.00" fill="#dcdce0"/>
<g transform="translate(3169.00 1912.00)" font-family='"Liberation Mono", monospace' font-size="48.33"><text transform="translate(0.00 0) scale(0.9976 1.120)" fill="#6a6a6c" stroke="#6a6a6c" stroke-width="1.0">ab</text><text transform="translate(86.79 0) scale(0.9976 1.120)" fill="#6a6a6c" stroke="#6a6a6c" stroke-width="1.0">target</text><text transform="translate(289.30 0) scale(0.9976 1.120)" fill="#6a6a6c" stroke="#6a6a6c" stroke-width="1.0">server</text><rect x="59.58" y="-17.40" width="25.50" height="4.40" fill="#6a6a6c"/><rect x="262.08" y="-17.40" width="25.50" height="4.40" fill="#6a6a6c"/></g>
<g transform="translate(2130.00 1998.40)" font-family='"Liberation Mono", monospace' font-size="48.33"><text transform="translate(0.00 0) scale(0.9976 1.120)" fill="#774aae" stroke="#774aae" stroke-width="1.0">172.20.0.3</text><text transform="translate(405.06 0) scale(0.9976 1.120)" fill="#dcdce0" stroke="#dcdce0" stroke-width="1.0">[</text><text transform="translate(433.99 0) scale(0.9976 1.120)" fill="#aaaaae" stroke="#aaaaae" stroke-width="1.0">03/Jul/2019:16:40:16</text><text transform="translate(1031.89 0) scale(0.9976 1.120)" fill="#aaaaae" stroke="#aaaaae" stroke-width="1.0">+0000</text><text transform="translate(1176.54 0) scale(0.9976 1.120)" fill="#dcdce0" stroke="#dcdce0" stroke-width="1.0">]</text><text transform="translate(1224.77 0) scale(0.9976 1.120)" fill="#dcdce0" stroke="#dcdce0" stroke-width="1.0">&quot;</text><text transform="translate(1253.70 0) scale(0.9976 1.120)" fill="#333335" stroke="#333335" stroke-width="1.0">GET</text><text transform="translate(1359.79 0) scale(0.9976 1.120)" fill="#333335" stroke="#333335" stroke-width="1.0">/</text><text transform="translate(1408.02 0) scale(0.9976 1.120)" fill="#333335" stroke="#333335" stroke-width="1.0">HTTP/1.0</text><text transform="translate(1639.46 0) scale(0.9976 1.120)" fill="#dcdce0" stroke="#dcdce0" stroke-width="1.0">&quot;</text><text transform="translate(1687.69 0) scale(0.9976 1.120)" fill="#3cba5e" stroke="#3cba5e" stroke-width="1.0">200</text><text transform="translate(1793.78 0) scale(0.9976 1.120)" fill="#3cba5e" stroke="#3cba5e" stroke-width="1.0">612</text><text transform="translate(1899.87 0) scale(0.9976 1.120)" fill="#dcdce0" stroke="#dcdce0" stroke-width="1.0">&quot;</text><text transform="translate(1957.73 0) scale(0.9976 1.120)" fill="#dcdce0" stroke="#dcdce0" stroke-width="1.0">&quot;</text><rect x="310.31" y="-17.40" width="25.50" height="4.40" fill="#dcdce0"/><rect x="358.55" y="-17.40" width="25.50" height="4.40" fill="#dcdce0"/><rect x="1930.52" y="-17.40" width="25.50" height="4.40" fill="#dcdce0"/></g>
<g transform="translate(2130.00 2075.50)" font-family='"Liberation Mono", monospace' font-size="48.33"><text transform="translate(0.00 0) scale(0.9976 1.120)" fill="#dcdce0" stroke="#dcdce0" stroke-width="1.0">&quot;</text><text transform="translate(28.93 0) scale(0.9976 1.120)" fill="#333335" stroke="#333335" stroke-width="1.0">ApacheBench/</text><text transform="translate(376.09 0) scale(0.9976 1.120)" fill="#3cba5e" stroke="#3cba5e" stroke-width="1.0">2.3</text><text transform="translate(462.88 0) scale(0.9976 1.120)" fill="#dcdce0" stroke="#dcdce0" stroke-width="1.0">&quot;</text><text transform="translate(511.11 0) scale(0.9976 1.120)" fill="#dcdce0" stroke="#dcdce0" stroke-width="1.0">&quot;</text><text transform="translate(568.97 0) scale(0.9976 1.120)" fill="#dcdce0" stroke="#dcdce0" stroke-width="1.0">&quot;</text><rect x="541.76" y="-17.40" width="25.50" height="4.40" fill="#dcdce0"/></g>
<rect x="2046.00" y="2108.00" width="2426.00" height="3.80" fill="#dcdce0"/>
<rect x="2079.00" y="2128.50" width="20.00" height="219.00" fill="#97dca2" rx="10.00"/>
<g transform="translate(2145.50 2168.00)" font-family='"Liberation Mono", monospace' font-size="48.33"><text transform="translate(0.00 0) scale(0.9976 1.120)" fill="#6a6a6c" stroke="#6a6a6c" stroke-width="1.0">Jul</text><text transform="translate(106.09 0) scale(0.9976 1.120)" fill="#6a6a6c" stroke="#6a6a6c" stroke-width="1.0">03</text><text transform="translate(183.25 0) scale(0.9976 1.120)" fill="#6a6a6c" stroke="#6a6a6c" stroke-width="1.0">12:40:16.000</text></g>
<rect x="2710.30" y="2130.50" width="4.50" height="48.00" fill="#dcdce0"/>
<g transform="translate(2748.80 2168.00)" font-family='"Liberation Mono", monospace' font-size="48.33"><text transform="translate(0.00 0) scale(0.9976 1.120)" fill="#6a6a6c" stroke="#6a6a6c" stroke-width="1.0">doc_hostname</text></g>
<rect x="3130.40" y="2130.50" width="4.50" height="48.00" fill="#dcdce0"/>
<g transform="translate(3169.00 2168.00)" font-family='"Liberation Mono", monospace' font-size="48.33"><text transform="translate(0.00 0) scale(0.9976 1.120)" fill="#6a6a6c" stroke="#6a6a6c" stroke-width="1.0">ab</text><text transform="translate(86.79 0) scale(0.9976 1.120)" fill="#6a6a6c" stroke="#6a6a6c" stroke-width="1.0">target</text><text transform="translate(289.30 0) scale(0.9976 1.120)" fill="#6a6a6c" stroke="#6a6a6c" stroke-width="1.0">server</text><rect x="59.58" y="-17.40" width="25.50" height="4.40" fill="#6a6a6c"/><rect x="262.08" y="-17.40" width="25.50" height="4.40" fill="#6a6a6c"/></g>
<g transform="translate(2130.00 2254.40)" font-family='"Liberation Mono", monospace' font-size="48.33"><text transform="translate(0.00 0) scale(0.9976 1.120)" fill="#774aae" stroke="#774aae" stroke-width="1.0">172.20.0.3</text><text transform="translate(405.06 0) scale(0.9976 1.120)" fill="#dcdce0" stroke="#dcdce0" stroke-width="1.0">[</text><text transform="translate(433.99 0) scale(0.9976 1.120)" fill="#aaaaae" stroke="#aaaaae" stroke-width="1.0">03/Jul/2019:16:40:16</text><text transform="translate(1031.89 0) scale(0.9976 1.120)" fill="#aaaaae" stroke="#aaaaae" stroke-width="1.0">+0000</text><text transform="translate(1176.54 0) scale(0.9976 1.120)" fill="#dcdce0" stroke="#dcdce0" stroke-width="1.0">]</text><text transform="translate(1224.77 0) scale(0.9976 1.120)" fill="#dcdce0" stroke="#dcdce0" stroke-width="1.0">&quot;</text><text transform="translate(1253.70 0) scale(0.9976 1.120)" fill="#333335" stroke="#333335" stroke-width="1.0">GET</text><text transform="translate(1359.79 0) scale(0.9976 1.120)" fill="#333335" stroke="#333335" stroke-width="1.0">/</text><text transform="translate(1408.02 0) scale(0.9976 1.120)" fill="#333335" stroke="#333335" stroke-width="1.0">HTTP/1.0</text><text transform="translate(1639.46 0) scale(0.9976 1.120)" fill="#dcdce0" stroke="#dcdce0" stroke-width="1.0">&quot;</text><text transform="translate(1687.69 0) scale(0.9976 1.120)" fill="#3cba5e" stroke="#3cba5e" stroke-width="1.0">200</text><text transform="translate(1793.78 0) scale(0.9976 1.120)" fill="#3cba5e" stroke="#3cba5e" stroke-width="1.0">612</text><text transform="translate(1899.87 0) scale(0.9976 1.120)" fill="#dcdce0" stroke="#dcdce0" stroke-width="1.0">&quot;</text><text transform="translate(1957.73 0) scale(0.9976 1.120)" fill="#dcdce0" stroke="#dcdce0" stroke-width="1.0">&quot;</text><rect x="310.31" y="-17.40" width="25.50" height="4.40" fill="#dcdce0"/><rect x="358.55" y="-17.40" width="25.50" height="4.40" fill="#dcdce0"/><rect x="1930.52" y="-17.40" width="25.50" height="4.40" fill="#dcdce0"/></g>
<g transform="translate(2130.00 2331.50)" font-family='"Liberation Mono", monospace' font-size="48.33"><text transform="translate(0.00 0) scale(0.9976 1.120)" fill="#dcdce0" stroke="#dcdce0" stroke-width="1.0">&quot;</text><text transform="translate(28.93 0) scale(0.9976 1.120)" fill="#333335" stroke="#333335" stroke-width="1.0">ApacheBench/</text><text transform="translate(376.09 0) scale(0.9976 1.120)" fill="#3cba5e" stroke="#3cba5e" stroke-width="1.0">2.3</text><text transform="translate(462.88 0) scale(0.9976 1.120)" fill="#dcdce0" stroke="#dcdce0" stroke-width="1.0">&quot;</text><text transform="translate(511.11 0) scale(0.9976 1.120)" fill="#dcdce0" stroke="#dcdce0" stroke-width="1.0">&quot;</text><text transform="translate(568.97 0) scale(0.9976 1.120)" fill="#dcdce0" stroke="#dcdce0" stroke-width="1.0">&quot;</text><rect x="541.76" y="-17.40" width="25.50" height="4.40" fill="#dcdce0"/></g>
<rect x="2046.00" y="2364.00" width="2426.00" height="3.80" fill="#dcdce0"/>
<rect x="2079.00" y="2384.50" width="20.00" height="219.00" fill="#97dca2" rx="10.00"/>
<g transform="translate(2145.50 2424.00)" font-family='"Liberation Mono", monospace' font-size="48.33"><text transform="translate(0.00 0) scale(0.9976 1.120)" fill="#6a6a6c" stroke="#6a6a6c" stroke-width="1.0">Jul</text><text transform="translate(106.09 0) scale(0.9976 1.120)" fill="#6a6a6c" stroke="#6a6a6c" stroke-width="1.0">03</text><text transform="translate(183.25 0) scale(0.9976 1.120)" fill="#6a6a6c" stroke="#6a6a6c" stroke-width="1.0">12:40:16.000</text></g>
<rect x="2710.30" y="2386.50" width="4.50" height="48.00" fill="#dcdce0"/>
<g transform="translate(2748.80 2424.00)" font-family='"Liberation Mono", monospace' font-size="48.33"><text transform="translate(0.00 0) scale(0.9976 1.120)" fill="#6a6a6c" stroke="#6a6a6c" stroke-width="1.0">doc_hostname</text></g>
<rect x="3130.40" y="2386.50" width="4.50" height="48.00" fill="#dcdce0"/>
<g transform="translate(3169.00 2424.00)" font-family='"Liberation Mono", monospace' font-size="48.33"><text transform="translate(0.00 0) scale(0.9976 1.120)" fill="#6a6a6c" stroke="#6a6a6c" stroke-width="1.0">ab</text><text transform="translate(86.79 0) scale(0.9976 1.120)" fill="#6a6a6c" stroke="#6a6a6c" stroke-width="1.0">target</text><text transform="translate(289.30 0) scale(0.9976 1.120)" fill="#6a6a6c" stroke="#6a6a6c" stroke-width="1.0">server</text><rect x="59.58" y="-17.40" width="25.50" height="4.40" fill="#6a6a6c"/><rect x="262.08" y="-17.40" width="25.50" height="4.40" fill="#6a6a6c"/></g>
<g transform="translate(2130.00 2510.40)" font-family='"Liberation Mono", monospace' font-size="48.33"><text transform="translate(0.00 0) scale(0.9976 1.120)" fill="#774aae" stroke="#774aae" stroke-width="1.0">172.20.0.3</text><text transform="translate(405.06 0) scale(0.9976 1.120)" fill="#dcdce0" stroke="#dcdce0" stroke-width="1.0">[</text><text transform="translate(433.99 0) scale(0.9976 1.120)" fill="#aaaaae" stroke="#aaaaae" stroke-width="1.0">03/Jul/2019:16:40:16</text><text transform="translate(1031.89 0) scale(0.9976 1.120)" fill="#aaaaae" stroke="#aaaaae" stroke-width="1.0">+0000</text><text transform="translate(1176.54 0) scale(0.9976 1.120)" fill="#dcdce0" stroke="#dcdce0" stroke-width="1.0">]</text><text transform="translate(1224.77 0) scale(0.9976 1.120)" fill="#dcdce0" stroke="#dcdce0" stroke-width="1.0">&quot;</text><text transform="translate(1253.70 0) scale(0.9976 1.120)" fill="#333335" stroke="#333335" stroke-width="1.0">GET</text><text transform="translate(1359.79 0) scale(0.9976 1.120)" fill="#333335" stroke="#333335" stroke-width="1.0">/</text><text transform="translate(1408.02 0) scale(0.9976 1.120)" fill="#333335" stroke="#333335" stroke-width="1.0">HTTP/1.0</text><text transform="translate(1639.46 0) scale(0.9976 1.120)" fill="#dcdce0" stroke="#dcdce0" stroke-width="1.0">&quot;</text><text transform="translate(1687.69 0) scale(0.9976 1.120)" fill="#3cba5e" stroke="#3cba5e" stroke-width="1.0">200</text><text transform="translate(1793.78 0) scale(0.9976 1.120)" fill="#3cba5e" stroke="#3cba5e" stroke-width="1.0">612</text><text transform="translate(1899.87 0) scale(0.9976 1.120)" fill="#dcdce0" stroke="#dcdce0" stroke-width="1.0">&quot;</text><text transform="translate(1957.73 0) scale(0.9976 1.120)" fill="#dcdce0" stroke="#dcdce0" stroke-width="1.0">&quot;</text><rect x="310.31" y="-17.40" width="25.50" height="4.40" fill="#dcdce0"/><rect x="358.55" y="-17.40" width="25.50" height="4.40" fill="#dcdce0"/><rect x="1930.52" y="-17.40" width="25.50" height="4.40" fill="#dcdce0"/></g>
<g transform="translate(2130.00 2587.50)" font-family='"Liberation Mono", monospace' font-size="48.33"><text transform="translate(0.00 0) scale(0.9976 1.120)" fill="#dcdce0" stroke="#dcdce0" stroke-width="1.0">&quot;</text><text transform="translate(28.93 0) scale(0.9976 1.120)" fill="#333335" stroke="#333335" stroke-width="1.0">ApacheBench/</text><text transform="translate(376.09 0) scale(0.9976 1.120)" fill="#3cba5e" stroke="#3cba5e" stroke-width="1.0">2.3</text><text transform="translate(462.88 0) scale(0.9976 1.120)" fill="#dcdce0" stroke="#dcdce0" stroke-width="1.0">&quot;</text><text transform="translate(511.11 0) scale(0.9976 1.120)" fill="#dcdce0" stroke="#dcdce0" stroke-width="1.0">&quot;</text><text transform="translate(568.97 0) scale(0.9976 1.120)" fill="#dcdce0" stroke="#dcdce0" stroke-width="1.0">&quot;</text><rect x="541.76" y="-17.40" width="25.50" height="4.40" fill="#dcdce0"/></g>
<rect x="2046.00" y="2620.00" width="2426.00" height="3.80" fill="#dcdce0"/>
<rect x="2079.00" y="2640.50" width="20.00" height="219.00" fill="#97dca2" rx="10.00"/>
<g transform="translate(2145.50 2680.00)" font-family='"Liberation Mono", monospace' font-size="48.33"><text transform="translate(0.00 0) scale(0.9976 1.120)" fill="#6a6a6c" stroke="#6a6a6c" stroke-width="1.0">Jul</text><text transform="translate(106.09 0) scale(0.9976 1.120)" fill="#6a6a6c" stroke="#6a6a6c" stroke-width="1.0">03</text><text transform="translate(183.25 0) scale(0.9976 1.120)" fill="#6a6a6c" stroke="#6a6a6c" stroke-width="1.0">12:40:16.000</text></g>
<rect x="2710.30" y="2642.50" width="4.50" height="48.00" fill="#dcdce0"/>
<g transform="translate(2748.80 2680.00)" font-family='"Liberation Mono", monospace' font-size="48.33"><text transform="translate(0.00 0) scale(0.9976 1.120)" fill="#6a6a6c" stroke="#6a6a6c" stroke-width="1.0">doc_hostname</text></g>
<rect x="3130.40" y="2642.50" width="4.50" height="48.00" fill="#dcdce0"/>
<g transform="translate(3169.00 2680.00)" font-family='"Liberation Mono", monospace' font-size="48.33"><text transform="translate(0.00 0) scale(0.9976 1.120)" fill="#6a6a6c" stroke="#6a6a6c" stroke-width="1.0">ab</text><text transform="translate(86.79 0) scale(0.9976 1.120)" fill="#6a6a6c" stroke="#6a6a6c" stroke-width="1.0">target</text><text transform="translate(289.30 0) scale(0.9976 1.120)" fill="#6a6a6c" stroke="#6a6a6c" stroke-width="1.0">server</text><rect x="59.58" y="-17.40" width="25.50" height="4.40" fill="#6a6a6c"/><rect x="262.08" y="-17.40" width="25.50" height="4.40" fill="#6a6a6c"/></g>
<g transform="translate(2130.00 2766.40)" font-family='"Liberation Mono", monospace' font-size="48.33"><text transform="translate(0.00 0) scale(0.9976 1.120)" fill="#774aae" stroke="#774aae" stroke-width="1.0">172.20.0.3</text><text transform="translate(405.06 0) scale(0.9976 1.120)" fill="#dcdce0" stroke="#dcdce0" stroke-width="1.0">[</text><text transform="translate(433.99 0) scale(0.9976 1.120)" fill="#aaaaae" stroke="#aaaaae" stroke-width="1.0">03/Jul/2019:16:40:16</text><text transform="translate(1031.89 0) scale(0.9976 1.120)" fill="#aaaaae" stroke="#aaaaae" stroke-width="1.0">+0000</text><text transform="translate(1176.54 0) scale(0.9976 1.120)" fill="#dcdce0" stroke="#dcdce0" stroke-width="1.0">]</text><text transform="translate(1224.77 0) scale(0.9976 1.120)" fill="#dcdce0" stroke="#dcdce0" stroke-width="1.0">&quot;</text><text transform="translate(1253.70 0) scale(0.9976 1.120)" fill="#333335" stroke="#333335" stroke-width="1.0">GET</text><text transform="translate(1359.79 0) scale(0.9976 1.120)" fill="#333335" stroke="#333335" stroke-width="1.0">/</text><text transform="translate(1408.02 0) scale(0.9976 1.120)" fill="#333335" stroke="#333335" stroke-width="1.0">HTTP/1.0</text><text transform="translate(1639.46 0) scale(0.9976 1.120)" fill="#dcdce0" stroke="#dcdce0" stroke-width="1.0">&quot;</text><text transform="translate(1687.69 0) scale(0.9976 1.120)" fill="#3cba5e" stroke="#3cba5e" stroke-width="1.0">200</text><text transform="translate(1793.78 0) scale(0.9976 1.120)" fill="#3cba5e" stroke="#3cba5e" stroke-width="1.0">612</text><text transform="translate(1899.87 0) scale(0.9976 1.120)" fill="#dcdce0" stroke="#dcdce0" stroke-width="1.0">&quot;</text><text transform="translate(1957.73 0) scale(0.9976 1.120)" fill="#dcdce0" stroke="#dcdce0" stroke-width="1.0">&quot;</text><rect x="310.31" y="-17.40" width="25.50" height="4.40" fill="#dcdce0"/><rect x="358.55" y="-17.40" width="25.50" height="4.40" fill="#dcdce0"/><rect x="1930.52" y="-17.40" width="25.50" height="4.40" fill="#dcdce0"/></g>
<g transform="translate(2130.00 2843.50)" font-family='"Liberation Mono", monospace' font-size="48.33"><text transform="translate(0.00 0) scale(0.9976 1.120)" fill="#dcdce0" stroke="#dcdce0" stroke-width="1.0">&quot;</text><text transform="translate(28.93 0) scale(0.9976 1.120)" fill="#333335" stroke="#333335" stroke-width="1.0">ApacheBench/</text><text transform="translate(376.09 0) scale(0.9976 1.120)" fill="#3cba5e" stroke="#3cba5e" stroke-width="1.0">2.3</text><text transform="translate(462.88 0) scale(0.9976 1.120)" fill="#dcdce0" stroke="#dcdce0" stroke-width="1.0">&quot;</text><text transform="translate(511.11 0) scale(0.9976 1.120)" fill="#dcdce0" stroke="#dcdce0" stroke-width="1.0">&quot;</text><text transform="translate(568.97 0) scale(0.9976 1.120)" fill="#dcdce0" stroke="#dcdce0" stroke-width="1.0">&quot;</text><rect x="541.76" y="-17.40" width="25.50" height="4.40" fill="#dcdce0"/></g>
<rect x="2046.00" y="2876.00" width="2426.00" height="3.80" fill="#dcdce0"/></svg>
</body></html>
